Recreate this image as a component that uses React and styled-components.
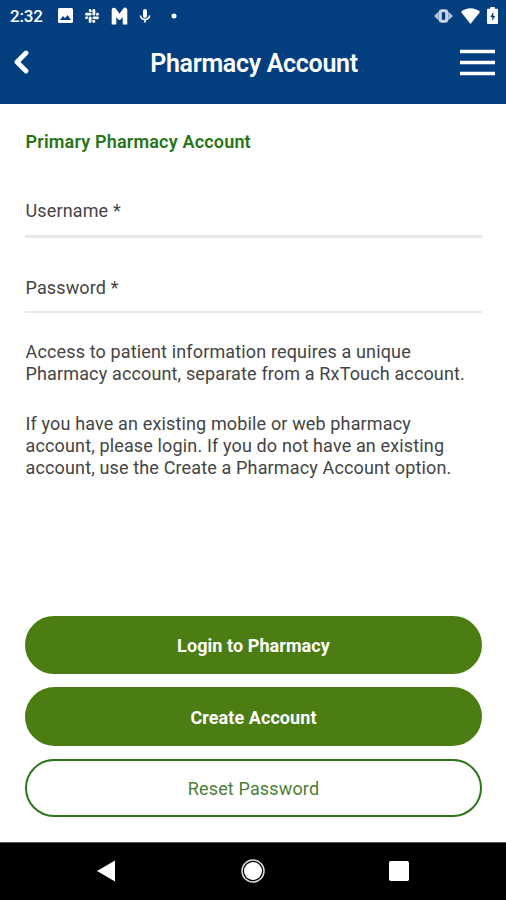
import styled, { createGlobalStyle } from "styled-components";
import { FaSlack } from "react-icons/fa";

const GlobalStyle = createGlobalStyle`
  * {
    box-sizing: border-box;
    margin: 0;
    padding: 0;
  }

  body {
    font-family: Roboto, "Liberation Sans", sans-serif;
    background-color: #fff;
  }

  svg {
    display: block;
    flex: none;
  }
`;

const Screen = styled.div`
  width: 506px;
  height: 900px;
  display: flex;
  flex-direction: column;
  overflow: hidden;
  background-color: #fff;
`;

const Header = styled.header`
  height: 104px;
  flex: none;
  background-color: #033f7f;
  color: #fff;
`;

const StatusBar = styled.div`
  height: 31px;
  padding: 0 8px 0 10px;
  display: flex;
  align-items: center;
  justify-content: space-between;
`;

const StatusGroup = styled.div`
  display: flex;
  align-items: center;
  gap: ${(props) => props.$gap};
`;

const Time = styled.span`
  width: 37px;
  font-size: 17px;
  line-height: 20px;
  font-weight: 500;
  letter-spacing: -0.2px;
`;

const TitleBar = styled.div`
  height: 62px;
  padding: 0 10px 0 13px;
  display: grid;
  grid-template-columns: 36px 1fr 36px;
  align-items: center;
`;

const IconButton = styled.button`
  display: flex;
  border: none;
  background: none;
  color: inherit;
`;

const Title = styled.h1`
  padding: 3px 1px 0 0;
  font-size: 25px;
  line-height: 30px;
  font-weight: 600;
  letter-spacing: -0.3px;
  text-align: center;
  white-space: nowrap;
`;

const Content = styled.main`
  flex: 1;
  padding: 27px 24px 25px 25px;
  display: flex;
  flex-direction: column;
`;

const SectionTitle = styled.h2`
  padding-left: 0.5px;
  font-size: 18px;
  line-height: 22px;
  font-weight: 600;
  letter-spacing: 0.18px;
  color: #267516;
`;

const Form = styled.form`
  padding-top: 47px;
  display: flex;
  flex-direction: column;
  gap: 39px;
`;

const Field = styled.label`
  height: ${(props) => props.$height};
  padding-left: 0.5px;
  border-bottom: ${(props) => props.$line} solid #e8e8e8;
  font-size: 18px;
  line-height: 22px;
  font-weight: 400;
  letter-spacing: 0.14px;
  color: #444;
`;

const Help = styled.div`
  padding: 28px 0 0 0.5px;
  display: flex;
  flex-direction: column;
  gap: 28px;
`;

const Paragraph = styled.p`
  font-size: 18px;
  line-height: 22px;
  font-weight: 400;
  letter-spacing: 0.145px;
  color: #444;
  white-space: nowrap;
`;

const Actions = styled.div`
  margin-top: auto;
  display: flex;
  flex-direction: column;
  gap: 13px;
`;

const Button = styled.button`
  height: 58.5px;
  padding-top: 2.5px;
  border: 2.5px solid ${(props) => (props.$outline ? "#2d761b" : "#4b7d13")};
  border-radius: 30px;
  background-color: ${(props) => (props.$outline ? "#fff" : "#4b7d13")};
  color: ${(props) => (props.$outline ? "#4c7f35" : "#fff")};
  font-family: inherit;
  font-size: 18px;
  line-height: 22px;
  font-weight: ${(props) => (props.$outline ? 400 : 700)};
  letter-spacing: ${(props) => (props.$outline ? "0.15px" : "0.07px")};
`;

const NavBar = styled.nav`
  height: 58px;
  flex: none;
  padding: 0 97px 2px 96px;
  display: flex;
  align-items: center;
  justify-content: space-between;
  background-color: #000;
  border-top: 1px solid #555;
`;

function PictureIcon() {
  return (
    <svg width="15" height="15" viewBox="0 0 15 15">
      <path
        fill="#fff"
        fillRule="evenodd"
        d="M1.5 0h12A1.5 1.5 0 0 1 15 1.5v12a1.5 1.5 0 0 1-1.5 1.5h-12A1.5 1.5 0 0 1 0 13.5v-12A1.5 1.5 0 0 1 1.5 0ZM2 12h11L9.5 7 7 10.3 5 8Z"
      />
    </svg>
  );
}

function LetterIcon() {
  return (
    <svg width="17" height="18" viewBox="0 0 17 18">
      <path
        d="M3 17.5V3l5.5 7.5L14 3v14.5"
        fill="none"
        stroke="#fff"
        strokeWidth="4.6"
        strokeLinejoin="round"
      />
    </svg>
  );
}

function MicIcon() {
  return (
    <svg width="12" height="14" viewBox="0 0 12 14">
      <rect x="4" y="0" width="4" height="9" rx="2" fill="#fff" />
      <path
        d="M1.5 6.5a4.5 4 0 0 0 9 0M6 10.5v3"
        fill="none"
        stroke="#fff"
        strokeWidth="1.7"
      />
    </svg>
  );
}

function DotIcon() {
  return (
    <svg width="6" height="6" viewBox="0 0 6 6">
      <circle cx="3" cy="3" r="2.5" fill="#fff" />
    </svg>
  );
}

function VibrateIcon() {
  return (
    <svg width="19" height="14" viewBox="0 0 19 14">
      <path d="M0 7 4.7 2.5v9ZM19 7l-4.7-4.5v9Z" fill="#b4c4d8" />
      <rect
        x="6.3"
        y="1.8"
        width="6.4"
        height="10.4"
        rx="1.5"
        fill="none"
        stroke="#c9d5e3"
        strokeWidth="3"
      />
    </svg>
  );
}

function WifiIcon() {
  return (
    <svg width="19" height="16" viewBox="0 0 19 16">
      <path d="M0 4C5.5-.9 13.5-.9 19 4L9.5 16Z" fill="#fff" />
    </svg>
  );
}

function BatteryIcon() {
  return (
    <svg width="11" height="17" viewBox="0 0 11 17">
      <path
        d="M3.3 0h4.4v1.8H10a1 1 0 0 1 1 1V16a1 1 0 0 1-1 1H1a1 1 0 0 1-1-1V2.8a1 1 0 0 1 1-1h2.3Z"
        fill="#fff"
      />
      <path d="M6.3 5 3.3 10h1.9v4l3-5H6.3Z" fill="#033f7f" />
    </svg>
  );
}

function BackIcon() {
  return (
    <svg width="16" height="24" viewBox="0 0 16 24">
      <path
        d="M13 3 4 12l9 9"
        fill="none"
        stroke="#fff"
        strokeWidth="4.8"
        strokeLinecap="round"
        strokeLinejoin="round"
      />
    </svg>
  );
}

function MenuIcon() {
  return (
    <svg width="35" height="27" viewBox="0 0 35 27">
      <path
        d="M0 2.5h35M0 13.5h35M0 24.5h35"
        stroke="#fff"
        strokeWidth="3.4"
      />
    </svg>
  );
}

function NavBackIcon() {
  return (
    <svg width="20" height="22" viewBox="0 0 20 22">
      <path d="M1 11 19 .5v21Z" fill="#fff" />
    </svg>
  );
}

function NavHomeIcon() {
  return (
    <svg width="24" height="24" viewBox="0 0 24 24">
      <circle cx="12" cy="12" r="11" fill="none" stroke="#ddd" strokeWidth="1.5" />
      <circle cx="12" cy="12" r="9" fill="#fff" />
    </svg>
  );
}

function NavRecentIcon() {
  return (
    <svg width="20" height="20" viewBox="0 0 20 20">
      <rect width="20" height="20" rx="1.8" fill="#fff" />
    </svg>
  );
}

function App() {
  return (
    <>
      <GlobalStyle />
      <Screen>
        <Header>
          <StatusBar>
            <StatusGroup $gap="11px">
              <Time>2:32</Time>
              <PictureIcon />
              <FaSlack size={16} />
              <LetterIcon />
              <StatusGroup $gap="20px">
                <MicIcon />
                <DotIcon />
              </StatusGroup>
            </StatusGroup>
            <StatusGroup $gap="7.5px">
              <VibrateIcon />
              <WifiIcon />
              <BatteryIcon />
            </StatusGroup>
          </StatusBar>
          <TitleBar>
            <IconButton aria-label="Back">
              <BackIcon />
            </IconButton>
            <Title>Pharmacy Account</Title>
            <IconButton aria-label="Menu">
              <MenuIcon />
            </IconButton>
          </TitleBar>
        </Header>

        <Content>
          <SectionTitle>Primary Pharmacy Account</SectionTitle>
          <Form>
            <Field $height="38px" $line="3px">
              Username *
            </Field>
            <Field $height="36px" $line="2px">
              Password *
            </Field>
          </Form>
          <Help>
            <Paragraph>
              Access to patient information requires a unique
              <br />
              Pharmacy account, separate from a RxTouch account.
            </Paragraph>
            <Paragraph>
              If you have an existing mobile or web pharmacy
              <br />
              account, please login. If you do not have an existing
              <br />
              account, use the Create a Pharmacy Account option.
            </Paragraph>
          </Help>
          <Actions>
            <Button>Login to Pharmacy</Button>
            <Button>Create Account</Button>
            <Button $outline>Reset Password</Button>
          </Actions>
        </Content>

        <NavBar>
          <NavBackIcon />
          <NavHomeIcon />
          <NavRecentIcon />
        </NavBar>
      </Screen>
    </>
  );
}

export default App;
